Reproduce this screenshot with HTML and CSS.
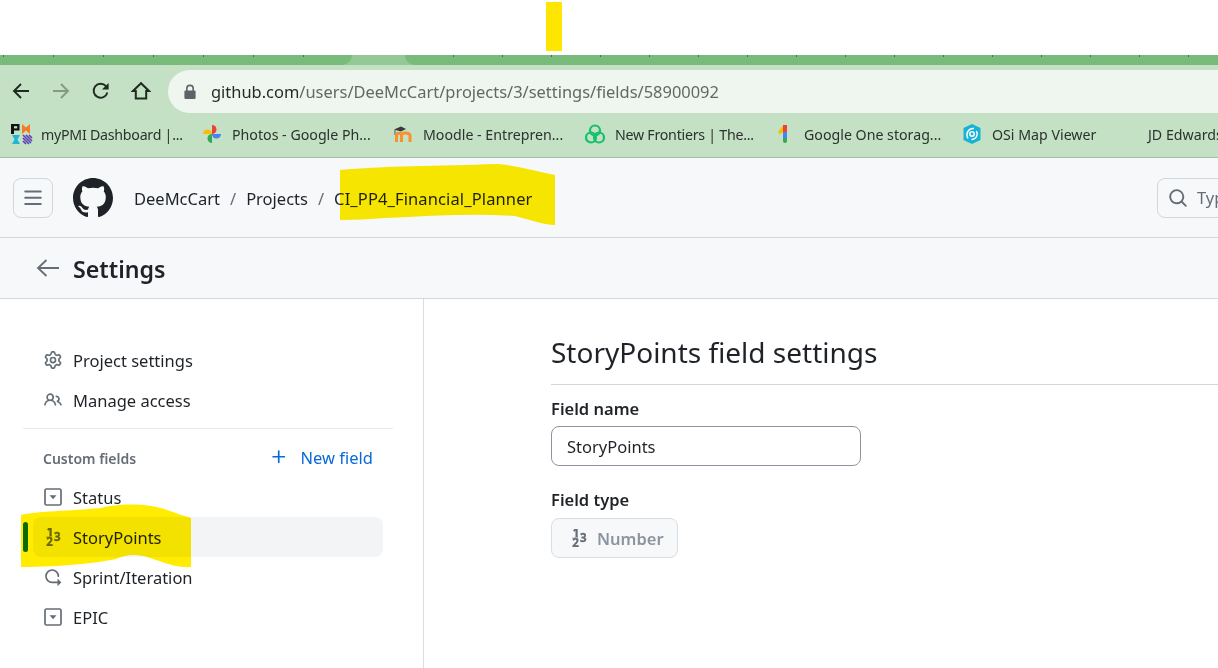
FILE: index.html
```html
<!DOCTYPE html>
<html lang="en">
<head>
  <meta charset="UTF-8">
  <title>StoryPoints field settings</title>
  <link rel="stylesheet" href="styles.css">
</head>
<body>
  <svg class="defs" xmlns="http://www.w3.org/2000/svg">
    <symbol id="i-select" viewBox="0 0 18 18">
      <rect x="1" y="1" width="16" height="16" rx="1.5" fill="none" stroke="currentColor" stroke-width="1.7"/>
      <path d="M5.5 7.2h7L9 11.2z" fill="currentColor"/>
    </symbol>
    <symbol id="i-number" viewBox="0 0 18 18">
      <text class="num-glyph" x="2.8" y="8">1</text>
      <text class="num-glyph" x="2.2" y="18">2</text>
      <text class="num-glyph" x="10" y="13">3</text>
      <path d="M2.2 9.100h6" stroke="currentColor" stroke-width="0.7"/>
    </symbol>
  </svg>

  <div class="top-blank"></div>

  <div class="tabstrip">
    <div class="tab tab-left"></div>
    <div class="tab tab-right"></div>
  </div>

  <div class="toolbar">
    <svg class="tool" width="20" height="20" viewBox="0 0 20 20"><path d="M18 10H3M10 3l-7 7 7 7" fill="none" stroke="#1f2a20" stroke-width="1.9"/></svg>
    <svg class="tool" width="20" height="20" viewBox="0 0 20 20"><path d="M2 10h15M10 3l7 7-7 7" fill="none" stroke="#839a85" stroke-width="1.9"/></svg>
    <svg class="tool" width="20" height="20" viewBox="0 0 20 20"><path d="M16.4 11.6A7 7 0 1 1 15 5.2" fill="none" stroke="#1f2a20" stroke-width="1.9"/><path d="M17.6 2v6.6H11z" fill="#1f2a20"/></svg>
    <svg class="tool" width="20" height="20" viewBox="0 0 20 20"><path d="M10 2.200 2 10h2.800v7.600h10.400V10H18z" fill="none" stroke="#1f2a20" stroke-width="2"/></svg>
    <div class="omnibox">
      <svg width="14" height="16" viewBox="0 0 14 16"><path d="M3.8 7V4.6a3.2 3.2 0 0 1 6.4 0V7" fill="none" stroke="#5f6368" stroke-width="1.6"/><rect x="1.4" y="6.4" width="11.2" height="8.6" rx="1.2" fill="#5f6368"/></svg>
      <span class="url"><span class="url-host">github.com</span>/users/DeeMcCart/projects/3/settings/fields/58900092</span>
    </div>
  </div>

  <div class="bookmarks">
    <div class="bookmark bookmark-tight">
      <svg class="fav fav-wide" width="22" height="22" viewBox="0 0 22 22">
        <path d="M0 1h8.500v6.500H3V11H0z" fill="#111"/><path d="M3 3.200h3.200v2.200H3z" fill="#c4e0c5"/>
        <path d="M11 1l4 3.500L19 1v10l-4-3.500L11 11z" fill="#f47b20"/>
        <path d="M1 12h8l-2.600 4.500L9 21H1l2.600-4.500z" fill="#1fb6d9"/>
        <path d="M12 12l8 8M15 12l6 6M12 15l6 6M18 12l3 3M12 18l3 3" stroke="#5b3db5" stroke-width="1.600"/>
      </svg>
      <span>myPMI Dashboard |...</span>
    </div>
    <div class="bookmark">
      <svg class="fav" width="20" height="20" viewBox="0 0 20 20">
        <path d="M1 10a4.500 4.500 0 0 1 9 0z" fill="#fbbc04"/>
        <path d="M10 1a4.500 4.500 0 0 1 0 9z" fill="#ea4335"/>
        <path d="M19 10a4.500 4.500 0 0 1-9 0z" fill="#4285f4"/>
        <path d="M10 19a4.500 4.500 0 0 1 0-9z" fill="#34a853"/>
      </svg>
      <span>Photos - Google Ph...</span>
    </div>
    <div class="bookmark">
      <svg class="fav" width="20" height="20" viewBox="0 0 20 20">
        <path d="M1 5.500 8 2.500l5 2.500-5 2.400z" fill="#3a3a3a"/><path d="M2 6v5" stroke="#555" stroke-width="1"/>
        <path d="M3.500 18v-7c0-2.500 5-2.500 5 0v7M8.500 18v-7c0-2.500 8.500-3.500 8.500 1v6" fill="none" stroke="#f59331" stroke-width="3"/>
      </svg>
      <span>Moodle - Entrepren...</span>
    </div>
    <div class="bookmark bookmark-tight">
      <svg class="fav" width="20" height="20" viewBox="0 0 20 20">
        <g fill="none" stroke="#14c06a" stroke-width="2.200"><circle cx="10" cy="6.500" r="5"/><circle cx="6" cy="13.500" r="5"/><circle cx="14" cy="13.500" r="5"/></g>
      </svg>
      <span>New Frontiers | The...</span>
    </div>
    <div class="bookmark">
      <svg class="fav" width="20" height="20" viewBox="0 0 20 20">
        <path d="M4 8 9 1.500 10 7 6 10.500z" fill="#fbbc04"/><path d="M9 1h4v7H9z" fill="#ea4335"/>
        <path d="M9 8h4v6H9z" fill="#4285f4"/><path d="M9 14h4v3a2 2 0 0 1-4 0z" fill="#34a853"/>
      </svg>
      <span>Google One storag...</span>
    </div>
    <div class="bookmark">
      <svg class="fav" width="20" height="20" viewBox="0 0 20 20">
        <path d="M10 0l8.500 4v12L10 20 1.500 16V4z" fill="#17b3d6"/>
        <g fill="none" stroke="#fff" stroke-width="1.500"><circle cx="10" cy="10" r="2.200"/><path d="M6 14.500C3 9 7 4 12 4.500M14.500 7c2 4-.5 8.500-5 8.500"/></g>
      </svg>
      <span>OSi Map Viewer</span>
    </div>
    <div class="bookmark">
      <span class="fav fav-blank"></span>
      <span>JD Edwards</span>
    </div>
  </div>

  <header class="gh-header">
    <button class="menu-btn">
      <svg width="20" height="20" viewBox="0 0 16 16"><path fill="#656d76" d="M1 2.750A.750.750 0 0 1 1.750 2h12.500a.750.750 0 0 1 0 1.500H1.750A.750.750 0 0 1 1 2.750Zm0 5A.750.750 0 0 1 1.750 7h12.500a.750.750 0 0 1 0 1.500H1.750A.750.750 0 0 1 1 7.750ZM1.750 12h12.500a.750.750 0 0 1 0 1.500H1.750a.750.750 0 0 1 0-1.500Z"/></svg>
    </button>
    <svg class="gh-logo" width="40" height="40" viewBox="0 0 16 16"><path fill="#1f2328" d="M8 0c4.420 0 8 3.580 8 8a8.013 8.013 0 0 1-5.450 7.590c-.400.080-.550-.170-.550-.380 0-.270.010-1.130.010-2.200 0-.750-.250-1.230-.540-1.480 1.780-.200 3.650-.880 3.650-3.950 0-.880-.310-1.590-.820-2.150.080-.200.360-1.020-.080-2.120 0 0-.670-.220-2.200.820-.640-.180-1.320-.270-2-.270-.680 0-1.360.090-2 .270-1.530-1.030-2.200-.820-2.200-.820-.440 1.100-.160 1.920-.080 2.120-.510.560-.820 1.280-.820 2.150 0 3.060 1.860 3.750 3.640 3.950-.230.200-.440.550-.510 1.070-.460.210-1.610.550-2.330-.660-.150-.240-.600-.830-1.230-.820-.670.010-.270.380.010.530.340.190.730.900.820 1.130.160.450.680 1.310 2.690.940 0 .670.010 1.300.010 1.490 0 .210-.150.450-.550.380A7.995 7.995 0 0 1 0 8c0-4.420 3.580-8 8-8Z"/></svg>
    <nav class="crumbs">
      <span>DeeMcCart</span>
      <span class="crumb-sep">/</span>
      <span>Projects</span>
      <span class="crumb-sep">/</span>
      <span class="crumb-current">CI_PP4_Financial_Planner</span>
    </nav>
    <div class="search">
      <svg width="20" height="20" viewBox="0 0 16 16"><path fill="#656d76" d="M10.680 11.740a6 6 0 0 1-7.922-8.982 6 6 0 0 1 8.982 7.922l3.040 3.040a.749.749 0 0 1-.326 1.275.749.749 0 0 1-.734-.215ZM11.500 7a4.499 4.499 0 1 0-8.997 0A4.499 4.499 0 0 0 11.500 7Z"/></svg>
      <span class="search-text">Type / to search</span>
    </div>
  </header>

  <div class="settings-bar">
    <svg width="24" height="20" viewBox="0 0 24 20"><path d="M23 10H2M10.500 2 2 10l8.500 8" fill="none" stroke="#656d76" stroke-width="1.800"/></svg>
    <h1>Settings</h1>
  </div>

  <div class="layout">
    <aside class="sidebar">
      <a class="side-item">
        <svg width="18" height="18" viewBox="0 0 16 16"><path fill="#656d76" d="M8 0a8.200 8.200 0 0 1 .701.031C9.444.095 9.990.645 10.160 1.290l.288 1.107c.018.066.079.158.212.224.231.114.454.243.668.386.123.082.233.090.299.071l1.103-.303c.644-.176 1.392.021 1.820.630.270.385.506.792.704 1.218.315.675.111 1.422-.364 1.891l-.814.806c-.049.048-.098.147-.088.294.016.257.016.515 0 .772-.010.147.038.246.088.294l.814.806c.475.469.679 1.216.364 1.891a7.977 7.977 0 0 1-.704 1.217c-.428.610-1.176.807-1.820.630l-1.102-.302c-.067-.019-.177-.011-.300.071a5.909 5.909 0 0 1-.668.386c-.133.066-.194.158-.211.224l-.290 1.106c-.168.646-.715 1.196-1.458 1.260a8.006 8.006 0 0 1-1.402 0c-.743-.064-1.289-.614-1.458-1.260l-.289-1.106c-.018-.066-.079-.158-.212-.224a5.738 5.738 0 0 1-.668-.386c-.123-.082-.233-.090-.299-.071l-1.103.303c-.644.176-1.392-.021-1.820-.630a8.120 8.120 0 0 1-.704-1.218c-.315-.675-.111-1.422.363-1.891l.815-.806c.050-.048.098-.147.088-.294a6.214 6.214 0 0 1 0-.772c.010-.147-.038-.246-.088-.294l-.815-.806C.635 6.045.431 5.298.746 4.623a7.920 7.920 0 0 1 .704-1.217c.428-.610 1.176-.807 1.820-.630l1.102.302c.067.019.177.011.300-.071.214-.143.437-.272.668-.386.133-.066.194-.158.211-.224l.290-1.106C6.009.645 6.556.095 7.299.030 7.530.010 7.764 0 8 0Zm-.571 1.525c-.036.003-.108.036-.137.146l-.289 1.105c-.147.561-.549.967-.998 1.189-.173.086-.340.183-.500.290-.417.278-.970.423-1.529.270l-1.103-.303c-.109-.030-.175.016-.195.045-.220.312-.412.644-.573.990-.014.031-.021.110.059.190l.815.806c.411.406.562.957.530 1.456a4.709 4.709 0 0 0 0 .582c.032.499-.119 1.050-.530 1.456l-.815.806c-.081.080-.073.159-.059.190.162.346.353.677.573.989.020.030.085.076.195.046l1.102-.303c.560-.153 1.113-.008 1.530.270.161.107.328.204.501.290.447.222.850.629.997 1.189l.289 1.105c.029.109.101.143.137.146a6.600 6.600 0 0 0 1.142 0c.036-.003.108-.036.137-.146l.289-1.105c.147-.561.549-.967.998-1.189.173-.086.340-.183.500-.290.417-.278.970-.423 1.529-.270l1.103.303c.109.029.175-.016.195-.045.220-.313.411-.644.573-.990.014-.031.021-.110-.059-.190l-.815-.806c-.411-.406-.562-.957-.530-1.456a4.709 4.709 0 0 0 0-.582c-.032-.499.119-1.050.530-1.456l.815-.806c.081-.080.073-.159.059-.190a6.464 6.464 0 0 0-.573-.989c-.020-.030-.085-.076-.195-.046l-1.102.303c-.560.153-1.113-.008-1.530-.270a4.440 4.440 0 0 0-.501-.290c-.447-.222-.850-.629-.997-1.189l-.289-1.105c-.029-.110-.101-.143-.137-.146a6.600 6.600 0 0 0-1.142 0ZM11 8a3 3 0 1 1-6 0 3 3 0 0 1 6 0ZM9.500 8a1.500 1.500 0 1 0-3.001.001A1.500 1.500 0 0 0 9.500 8Z"/></svg>
        <span>Project settings</span>
      </a>
      <a class="side-item">
        <svg width="18" height="18" viewBox="0 0 16 16"><path fill="#656d76" d="M2 5.500a3.500 3.500 0 1 1 5.898 2.549 5.508 5.508 0 0 1 3.034 4.084.750.750 0 1 1-1.482.235 4 4 0 0 0-7.900 0 .750.750 0 0 1-1.482-.236A5.507 5.507 0 0 1 3.102 8.050 3.493 3.493 0 0 1 2 5.500ZM11 4a3.001 3.001 0 0 1 2.220 5.018 5.010 5.010 0 0 1 2.560 3.012.749.749 0 0 1-.885.954.752.752 0 0 1-.549-.514 3.507 3.507 0 0 0-2.522-2.372.750.750 0 0 1-.574-.730v-.352a.750.750 0 0 1 .416-.672A1.500 1.500 0 0 0 11 5.500.750.750 0 0 1 11 4Zm-5.500-.500a2 2 0 1 0-.001 3.999A2 2 0 0 0 5.500 3.500Z"/></svg>
        <span>Manage access</span>
      </a>
      <div class="side-divider"></div>
      <div class="side-heading">
        <span class="side-title">Custom fields</span>
        <a class="new-field">
          <svg width="18" height="18" viewBox="0 0 16 16"><path fill="#0969da" d="M7.750 2a.750.750 0 0 1 .750.750V7h4.250a.750.750 0 0 1 0 1.500H8.500v4.250a.750.750 0 0 1-1.500 0V8.500H2.750a.750.750 0 0 1 0-1.500H7V2.750A.750.750 0 0 1 7.750 2Z"/></svg>
          <span>New field</span>
        </a>
      </div>
      <a class="side-item">
        <svg class="side-icon" width="18" height="18"><use href="#i-select"/></svg>
        <span>Status</span>
      </a>
      <a class="side-item is-active">
        <svg class="side-icon" width="18" height="18"><use href="#i-number"/></svg>
        <span>StoryPoints</span>
      </a>
      <a class="side-item">
        <svg width="18" height="18" viewBox="0 0 16 16"><path fill="#656d76" d="M2.500 7.250a4.750 4.750 0 0 1 9.500 0 .750.750 0 0 0 1.500 0 6.250 6.250 0 1 0-6.250 6.250H12v2.146c0 .223.270.335.427.177l2.896-2.896a.250.250 0 0 0 0-.354l-2.896-2.896a.250.250 0 0 0-.427.177V12H7.250A4.750 4.750 0 0 1 2.500 7.250Z"/></svg>
        <span>Sprint/Iteration</span>
      </a>
      <a class="side-item">
        <svg class="side-icon" width="18" height="18"><use href="#i-select"/></svg>
        <span>EPIC</span>
      </a>
    </aside>

    <main class="content">
      <h2>StoryPoints field settings</h2>
      <label class="field-label">Field name</label>
      <input class="field-input" type="text" value="StoryPoints">
      <label class="field-label field-label-type">Field type</label>
      <div class="type-btn">
        <svg class="type-icon" width="18" height="18"><use href="#i-number"/></svg>
        <span>Number</span>
      </div>
    </main>
  </div>

  <!-- marker pen scribbles on top of the screenshot -->
  <div class="marker marker-tab"></div>
  <svg class="marker marker-crumb" width="215" height="63" viewBox="0 0 215 63"><path d="M0 7C40 3 100 3 157 1C175 2 195 8 215 12V62C205 62 190 57 175 53C135 50 90 53 45 55C30 56 15 57 0 57Z"/></svg>
  <svg class="marker marker-row" width="170" height="65" viewBox="0 0 170 65"><path d="M0 12C15 8 50 8 80 5C95 1 125-1 146 7C155 10 163 13 170 15V64C155 65 145 60 129 55C115 50 105 52 95 56C75 60 40 64 0 64Z"/></svg>
</body>
</html>
```

FILE: styles.css
```css
* {
  box-sizing: border-box;
}
html, body {
  margin: 0;
  height: 668px;
  overflow: hidden;
}
body {
  position: relative;
  background-color: #fff;
  color: #1f2328;
  font-family: "Noto Sans", Arial, sans-serif;
  font-size: 16.5px;
}
.defs {
  display: none;
}
.num-glyph {
  font-family: "Noto Sans", sans-serif;
  font-size: 11.5px;
  font-weight: 700;
  fill: currentColor;
  stroke: currentColor;
  stroke-width: 0.35px;
}

/* browser chrome */
.top-blank {
  height: 55px;
}
.tabstrip {
  display: flex;
  justify-content: space-between;
  height: 10px;
  background-color: #94c897;
}
.tab {
  background-color: #78bb7b;
  background-image: linear-gradient(90deg, #4f6f52 1px, transparent 1px);
  background-repeat: repeat-x;
}
.tab-left {
  width: 352px;
  background-size: 50px 2px;
  background-position: 53px 0;
  border-bottom-right-radius: 10px;
}
.tab-right {
  width: 813px;
  flex: 1;
  margin-left: 53px;
  background-size: 49px 2px;
  background-position: 48px 0;
  border-bottom-left-radius: 10px;
}
.toolbar {
  display: flex;
  align-items: flex-start;
  gap: 20px;
  height: 48px;
  padding: 16px 0 0 11px;
  background-color: #c4e0c5;
}
.tool {
  flex: none;
}
.omnibox {
  display: flex;
  align-items: center;
  flex: 1;
  height: 43px;
  margin: -11px 0 0 -3px;
  padding-left: 15px;
  gap: 14px;
  background-color: #eff6f0;
  border-radius: 22px 0 0 22px;
}
.url {
  font-size: 16.45px;
  color: #5f6a62;
  white-space: nowrap;
}
.url-host {
  color: #1f2a20;
}
.bookmarks {
  display: grid;
  grid-template-columns: 191px 191px 192px 189px 188px 156px 100px;
  align-items: center;
  height: 45px;
  padding: 0 0 2px 11px;
  background-color: #c4e0c5;
  border-bottom: 1px solid #a3bfa6;
  overflow: hidden;
}
.bookmark {
  display: flex;
  align-items: center;
  gap: 10px;
  font-size: 14.2px;
  color: #2b332c;
  white-space: nowrap;
}
.bookmark-tight {
  letter-spacing: -0.25px;
}
.fav {
  flex: none;
}
.fav-wide {
  margin-right: -2px;
}
.fav-blank {
  width: 20px;
}

/* github header */
.gh-header {
  display: flex;
  align-items: center;
  height: 80px;
  padding-left: 13px;
  background-color: #f6f8fa;
  border-bottom: 1px solid #d0d7de;
}
.menu-btn {
  display: flex;
  align-items: center;
  justify-content: center;
  width: 40px;
  height: 40px;
  padding: 0;
  background-color: #f6f8fa;
  border: 1px solid #d0d7de;
  border-radius: 8px;
}
.gh-logo {
  margin-left: 20px;
}
.crumbs {
  display: flex;
  flex: 1;
  align-items: center;
  gap: 10px;
  margin-left: 21px;
  padding-top: 1px;
}
.crumb-sep {
  color: #656d76;
}
.crumb-current {
  letter-spacing: 0.12px;
}
.search {
  display: flex;
  align-items: center;
  flex: none;
  gap: 9px;
  width: 200px;
  height: 40px;
  margin-right: -139px;
  padding-left: 10px;
  background-color: #f6f8fa;
  border: 1px solid #d0d7de;
  border-radius: 8px;
  color: #656d76;
  overflow: hidden;
  white-space: nowrap;
}
.settings-bar {
  display: flex;
  align-items: center;
  gap: 13px;
  height: 61px;
  padding-left: 36px;
  background-color: #f6f8fa;
  border-bottom: 1px solid #d0d7de;
}
.settings-bar h1 {
  margin: 2px 0 0 0;
  font-size: 23.2px;
  font-weight: 600;
}

/* sidebar */
.layout {
  display: flex;
  height: 370px;
}
.sidebar {
  flex: none;
  width: 424px;
  padding: 41px 0 0 23px;
  border-right: 1px solid #d8dee4;
}
.side-item {
  position: relative;
  display: flex;
  align-items: center;
  gap: 11px;
  width: 350px;
  height: 40px;
  margin-left: 10px;
  padding-left: 11px;
  border-radius: 8px;
}
.side-item svg {
  flex: none;
}
.side-icon {
  color: #656d76;
}
.is-active {
  background-color: #f3f4f6;
}
.is-active::before {
  content: "";
  position: absolute;
  left: -10px;
  top: 5px;
  width: 5px;
  height: 30px;
  background-color: #0c7410;
  border-radius: 3px;
}
.side-divider {
  width: 370px;
  height: 1px;
  margin-top: 8px;
  background-color: #e5e8ec;
}
.side-heading {
  display: flex;
  align-items: center;
  justify-content: space-between;
  width: 330px;
  height: 48px;
  margin-left: 20px;
  padding-top: 10px;
}
.side-title {
  font-size: 14px;
  font-weight: 600;
  color: #656d76;
}
.new-field {
  display: flex;
  align-items: center;
  gap: 13px;
  margin-top: -2px;
  color: #0969da;
}

/* field form */
.content {
  flex: 1;
  padding: 32px 0 0 127px;
}
.content h2 {
  margin: 0 0 12px 0;
  padding-bottom: 11px;
  font-size: 28px;
  font-weight: 400;
  line-height: 42px;
  border-bottom: 1px solid #d0d7de;
}
.field-label {
  display: block;
  margin-bottom: 6px;
  font-weight: 600;
}
.field-label-type {
  margin-top: 22px;
  margin-bottom: 7px;
}
.field-input {
  display: block;
  width: 310px;
  height: 40px;
  padding: 0 15px;
  font-family: inherit;
  font-size: 16.5px;
  color: #1f2328;
  background-color: #fff;
  border: 1px solid #8c959f;
  border-radius: 8px;
}
.type-btn {
  display: inline-flex;
  align-items: center;
  gap: 9px;
  height: 40px;
  width: 127px;
  padding-left: 18px;
  font-weight: 600;
  color: #8c959f;
  background-color: #f6f8fa;
  border: 1px solid #d8dee4;
  border-radius: 8px;
}
.type-icon {
  color: #656d76;
}

/* yellow marker overlays */
.marker {
  position: absolute;
  mix-blend-mode: multiply;
  fill: #ffec00;
}
.marker-tab {
  left: 546px;
  top: 2px;
  width: 16px;
  height: 49px;
  background-color: #ffe600;
}
.marker-crumb {
  left: 340px;
  top: 163px;
}
.marker-row {
  left: 21px;
  top: 503px;
}
```
